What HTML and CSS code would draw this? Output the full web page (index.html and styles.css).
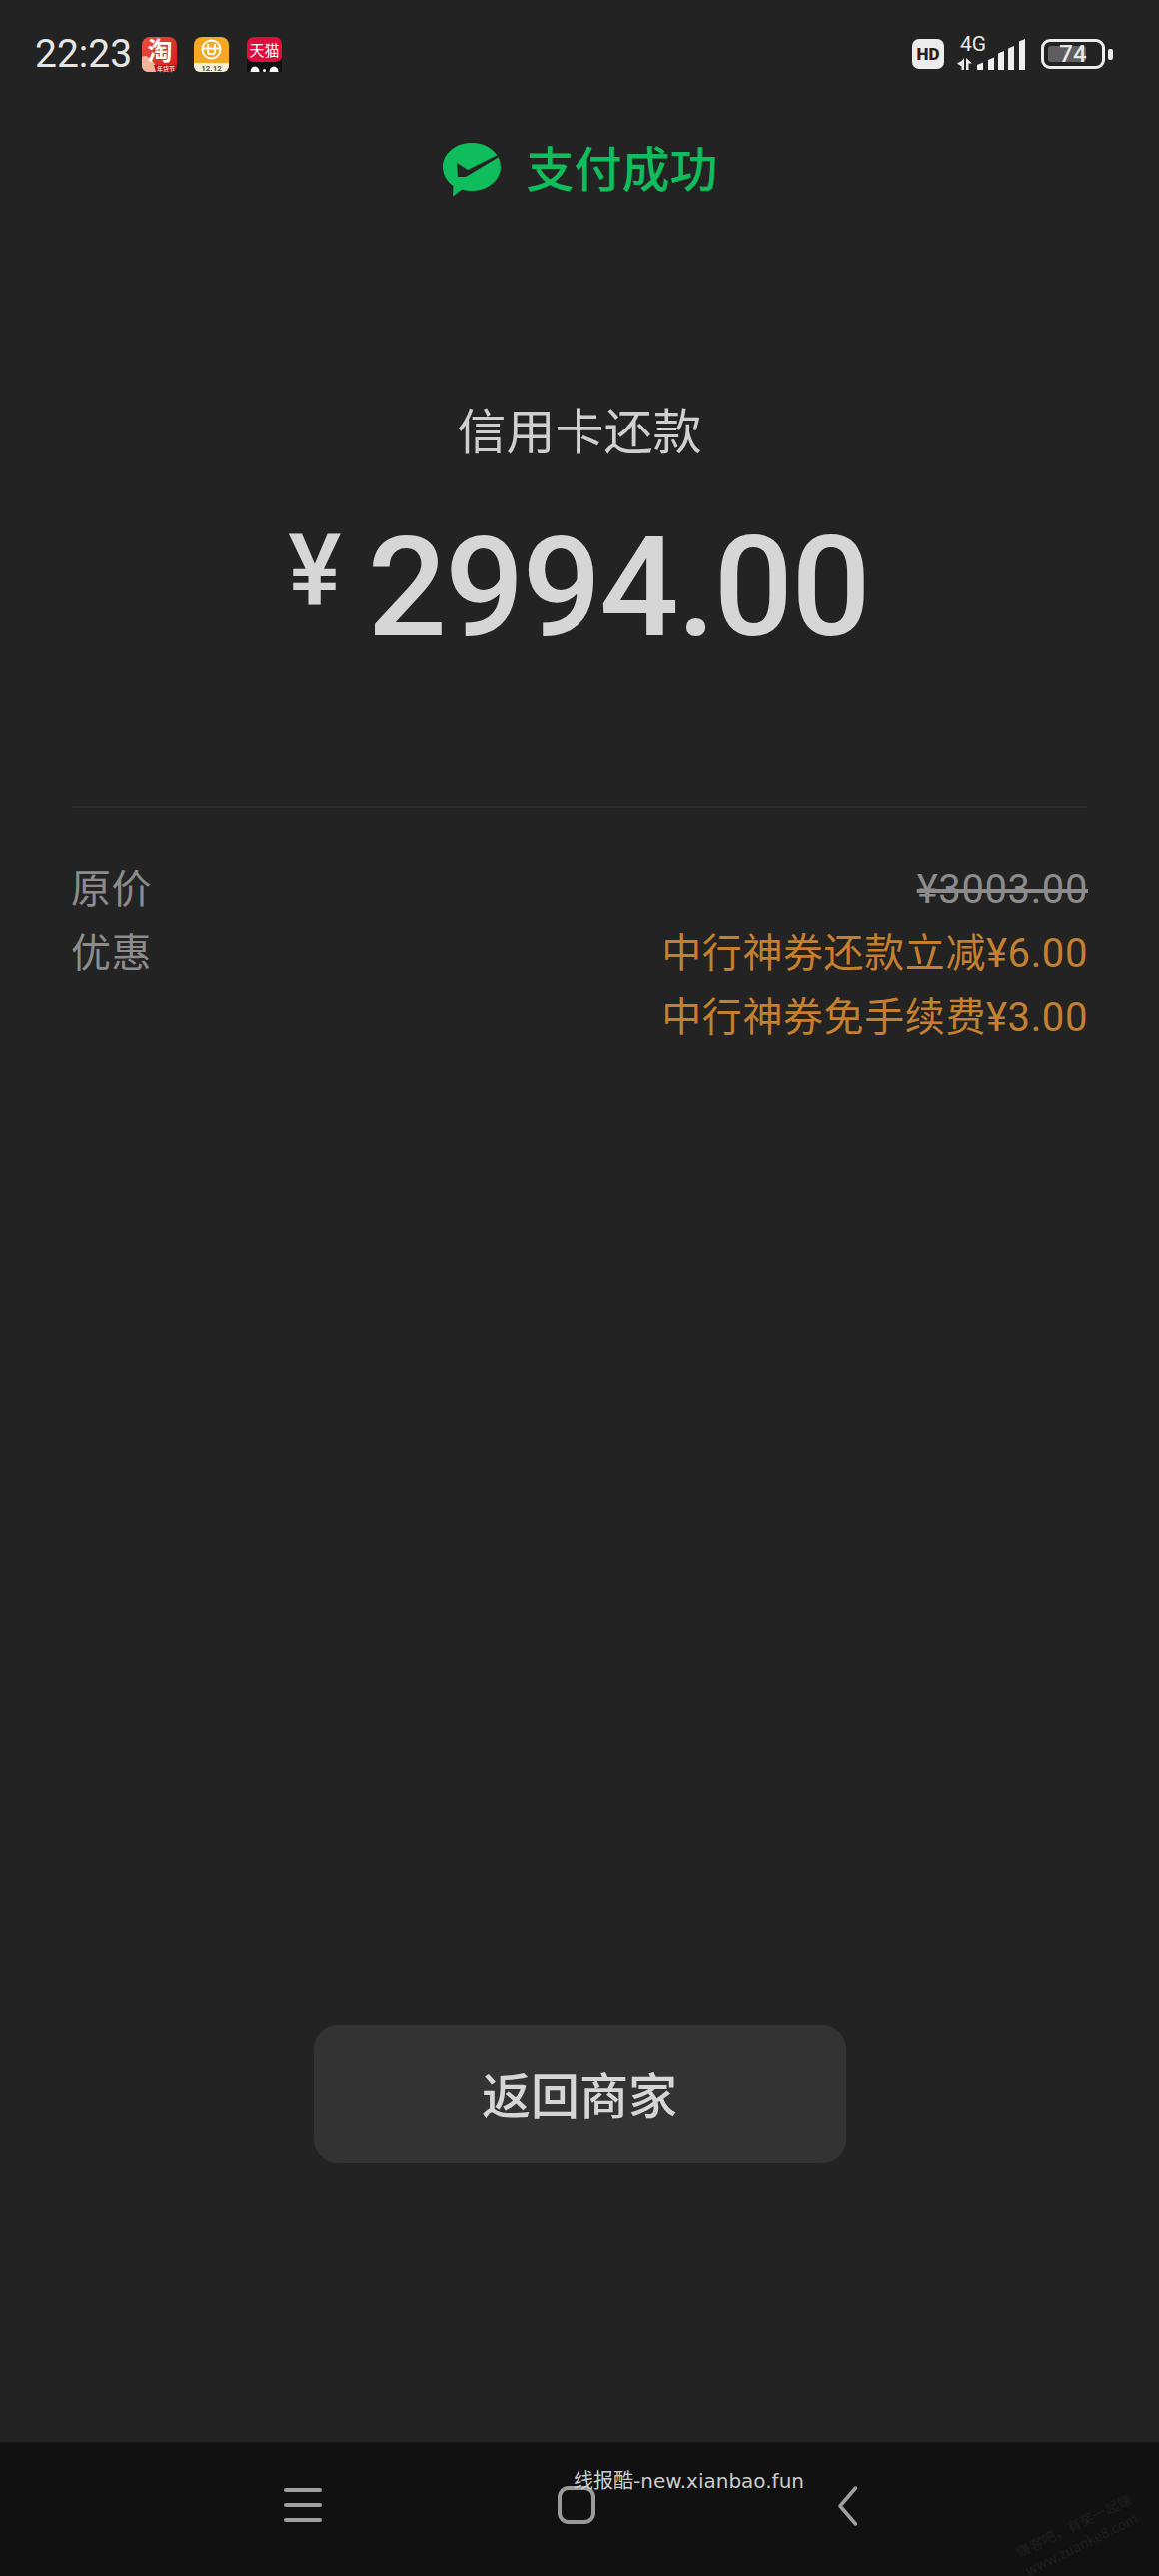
FILE: index.html
```html
<!DOCTYPE html>
<html lang="zh-CN">
<head>
    <meta charset="UTF-8" />
    <meta name="viewport" content="width=device-width, initial-scale=1.0"/>
    <title>支付成功</title>
    <link rel="stylesheet" href="styles.css">
</head>
<body>
<div class="tela">
    <header class="status">
        <div class="status-esq">
            <span class="hora">22:23</span>
            <svg class="app" viewBox="0 0 35 35">
                <defs>
                    <linearGradient id="tb" x1="0" y1="0" x2="1" y2="1">
                        <stop offset="0" stop-color="#e8503a"/>
                        <stop offset="1" stop-color="#d7191f"/>
                    </linearGradient>
                </defs>
                <rect width="35" height="35" rx="8" fill="url(#tb)"/>
                <path d="M0 20c5-3 9 2 12 6s5 9 4 9H6a6 6 0 0 1-6-6z" fill="#f3b49a"/>
                <path d="M12 28h23v1a6 6 0 0 1-6 6H14z" fill="#b8141c"/>
                <text class="app-tb" x="18" y="23">淘</text>
                <text class="app-mini" x="24" y="34">年货节</text>
            </svg>
            <svg class="app app-2" viewBox="0 0 35 35">
                <rect width="35" height="35" rx="8" fill="#f5a922"/>
                <path d="M0 26h35v3a6 6 0 0 1-6 6H6a6 6 0 0 1-6-6z" fill="#f7efd8"/>
                <circle cx="17.500" cy="12.500" r="9" fill="none" stroke="#fff" stroke-width="2"/>
                <path d="M14 7v8q0 2 2 2h3q2 0 2-2V7M8.500 11.500h18" fill="none" stroke="#fff" stroke-width="1.800"/>
                <text class="app-data" x="17.500" y="33.500">12.12</text>
            </svg>
            <svg class="app app-3" viewBox="0 0 35 35">
                <path d="M7 0h21a7 7 0 0 1 7 7v19H0V7a7 7 0 0 1 7-7z" fill="#dc0f3c"/>
                <path d="M0 21q3 4 7 4h21q4 0 7-4v14H0z" fill="#111111"/>
                <text class="app-tm" x="17.500" y="19">天猫</text>
                <path d="M3.500 35a4.500 5.500 0 0 1 9 0zM22.500 35a4.500 5.500 0 0 1 9 0z" fill="#fff"/>
                <circle cx="17.500" cy="33.500" r="1.500" fill="#fff"/>
            </svg>
        </div>
        <div class="status-dir">
            <span class="hd">HD</span>
            <svg class="sinal" viewBox="0 0 70 34">
                <text class="rede" x="4" y="14">4G</text>
                <path d="M8 21v12H5.500v-3.500L1 26.500l4.500-2.500zM10 21l6 5.500h-3.500V33H10z" fill="#e8e8e8"/>
                <g fill="#efefef">
                    <path d="M21 28l6-2.500V33h-6z"/>
                    <path d="M32 23l6-2.500V33h-6z"/>
                    <path d="M42 16.500l6-2.500v19h-6z"/>
                    <path d="M52 11.500l6-2.500v24h-6z"/>
                    <path d="M63 4.500l6-2.500v31h-6z"/>
                </g>
            </svg>
            <div class="bateria">
                <div class="bat-corpo">
                    <span class="bat-nivel"></span>
                    <span class="bat-texto">74</span>
                </div>
                <span class="bat-ponta"></span>
            </div>
        </div>
    </header>

    <div class="sucesso">
        <svg class="wx" viewBox="0 0 58 54">
            <path d="M29 0c16 0 29 10.500 29 24S45 48 29 48c-3.500 0-6.500-.5-9.500-1.500L10 53.500 10.500 43C4 38.500 0 31.700 0 24 0 10.500 13 0 29 0z" fill="#10bc5c"/>
            <path d="M14 20l11 7 32-16 1 2-35 21h-8z" fill="#232323"/>
        </svg>
        <span class="sucesso-txt">支付成功</span>
    </div>

    <h1 class="titulo">信用卡还款</h1>
    <div class="valor"><span class="moeda">¥</span><span class="numero">2994.00</span></div>

    <hr class="linha">

    <div class="detalhes">
        <div class="det-linha">
            <span class="det-rot">原价</span>
            <span class="det-riscado">¥3003.00</span>
        </div>
        <div class="det-linha">
            <span class="det-rot">优惠</span>
            <span class="det-laranja">中行神券还款立减¥6.00</span>
        </div>
        <div class="det-linha det-fim">
            <span class="det-laranja">中行神券免手续费¥3.00</span>
        </div>
    </div>

    <button class="btn-voltar">返回商家</button>

    <nav class="nav">
        <span class="menu"><i></i><i></i><i></i></span>
        <span class="home"></span>
        <svg class="volta" viewBox="0 0 21 40">
            <path d="M18.500 2L3 20l15.500 18" fill="none" stroke="#a0a0a0" stroke-width="3.500" stroke-linecap="round" stroke-linejoin="round"/>
        </svg>
        <span class="marca">线报酷-new.xianbao.fun</span>
        <span class="carimbo">赚客吧，有奖一起赚<br>www.zuanke8.com</span>
    </nav>
</div>
</body>
</html>
```

FILE: styles.css
```css
body {
    margin: 0;
    background-color: #232323;
    font-family: Roboto, "Noto Sans CJK SC", sans-serif;
}

.tela {
    position: relative;
    width: 1160px;
    height: 2579px;
    display: flex;
    flex-direction: column;
    align-items: center;
    background-color: #232323;
}

.status {
    width: 100%;
    height: 54px;
    margin-top: 27px;
    padding: 0 46px 0 35px;
    box-sizing: border-box;
    display: flex;
    justify-content: space-between;
    align-items: center;
}

.status-esq, .status-dir {
    display: flex;
    align-items: center;
}

.hora {
    font-size: 39px;
    color: #e6e6e6;
    width: 107px;
}

svg {
    overflow: visible;
}

.app {
    width: 35px;
    height: 35px;
}

.app-2 {
    margin-left: 17px;
}

.app-3 {
    margin-left: 18px;
}

.app-tb {
    font-size: 25px;
    font-weight: 700;
    fill: #fff;
    text-anchor: middle;
    font-family: "Noto Sans CJK SC", sans-serif;
}

.app-mini {
    font-size: 6px;
    fill: #fff;
    text-anchor: middle;
    font-family: "Noto Sans CJK SC", sans-serif;
}

.app-data {
    font-size: 8px;
    fill: #555;
    text-anchor: middle;
    font-weight: 700;
}

.app-tm {
    font-size: 15px;
    fill: #fff;
    text-anchor: middle;
    font-family: "Noto Sans CJK SC", sans-serif;
}

.hd {
    width: 32px;
    height: 30px;
    border-radius: 7px;
    background-color: #ececec;
    color: #232323;
    font-size: 17px;
    font-weight: 900;
    text-align: center;
    line-height: 30px;
}

.sinal {
    width: 70px;
    height: 34px;
    margin-left: 12px;
}

.rede {
    font-size: 21px;
    fill: #e8e8e8;
}

.bateria {
    display: flex;
    align-items: center;
    margin-left: 15px;
}

.bat-corpo {
    position: relative;
    width: 58px;
    height: 24px;
    border: 3px solid #ececec;
    border-radius: 9px;
    display: flex;
    align-items: center;
    justify-content: center;
}

.bat-nivel {
    position: absolute;
    left: 4px;
    top: 4px;
    bottom: 4px;
    width: 38px;
    border-radius: 3px;
    background-color: #5e5e5e;
}

.bat-texto {
    position: relative;
    font-size: 24px;
    font-weight: 500;
    color: #e6e6e6;
}

.bat-ponta {
    width: 5px;
    height: 11px;
    margin-left: 3px;
    border-radius: 2px;
    background-color: #ececec;
}

.sucesso {
    display: flex;
    align-items: center;
    height: 54px;
    margin-top: 62px;
    padding-left: 2px;
}

.wx {
    width: 58px;
    height: 54px;
}

.sucesso-txt {
    margin-left: 25px;
    padding-top: 2px;
    font-size: 48px;
    line-height: 54px;
    font-weight: 500;
    color: #10bc5c;
}

.titulo {
    margin: 207px 0 0;
    font-size: 49px;
    line-height: 60px;
    font-weight: 400;
    color: #cfcfcf;
}

.valor {
    display: flex;
    align-items: flex-start;
    height: 120px;
    margin-top: 64px;
    padding-right: 2px;
    color: #d6d6d6;
}

.moeda {
    font-size: 100px;
    line-height: 88px;
    font-weight: 500;
    margin-right: 26px;
}

.numero {
    font-size: 140px;
    line-height: 120px;
    font-weight: 500;
    letter-spacing: -2px;
}

.linha {
    width: 1018px;
    height: 2px;
    margin: 159px 0 0;
    border: none;
    background-color: #2c2c2c;
}

.detalhes {
    width: 1018px;
    margin-top: 57px;
}

.det-linha {
    display: flex;
    justify-content: space-between;
    height: 64px;
    font-size: 40px;
    letter-spacing: 0.600px;
    line-height: 50px;
}

.det-fim {
    justify-content: flex-end;
}

.det-rot {
    color: #8c8c8c;
}

.det-riscado {
    color: #8c8c8c;
    text-decoration: line-through;
}

.det-laranja {
    color: #c47f2f;
}

.btn-voltar {
    width: 533px;
    height: 139px;
    margin-top: 969px;
    padding: 0 0 5px;
    border: none;
    border-radius: 24px;
    background-color: #333333;
    color: #d6d6d6;
    font-family: inherit;
    font-size: 49px;
    font-weight: 500;
}

.nav {
    position: absolute;
    left: 0;
    right: 0;
    bottom: 0;
    height: 134px;
    background-color: #111111;
}

.menu {
    position: absolute;
    left: 284px;
    top: 46px;
    width: 38px;
    display: flex;
    flex-direction: column;
    gap: 11px;
}

.menu i {
    height: 4px;
    border-radius: 2px;
    background-color: #a0a0a0;
}

.home {
    position: absolute;
    left: 558px;
    top: 44px;
    width: 30px;
    height: 30px;
    border: 4px solid #9a9a9a;
    border-radius: 11px;
}

.volta {
    position: absolute;
    left: 838px;
    top: 44px;
    width: 21px;
    height: 40px;
}

.marca {
    position: absolute;
    left: 574px;
    top: 23px;
    font-family: "DejaVu Sans", "Noto Sans CJK SC", sans-serif;
    font-size: 20px;
    color: #cccccc;
}

.carimbo {
    position: absolute;
    left: 1016px;
    top: 72px;
    font-family: "Noto Sans CJK SC", sans-serif;
    font-size: 14px;
    line-height: 20px;
    color: #1f1f1f;
    white-space: nowrap;
    transform: rotate(-26deg);
}
```
